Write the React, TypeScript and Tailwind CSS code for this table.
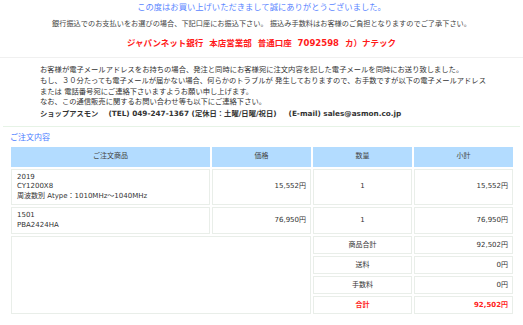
const font = { fontFamily: '"DejaVu Sans", "Noto Sans CJK JP", sans-serif' };

const items = [
  { lines: ["2019", "CY1200X8", "周波数別 Atype：1010MHz～1040MHz"], price: "15,552円", qty: "1", sub: "15,552円" },
  { lines: ["1501", "PBA2424HA"], price: "76,950円", qty: "1", sub: "76,950円" },
];

const totals = [
  { label: "商品合計", value: "92,502円", red: false },
  { label: "送料", value: "0円", red: false },
  { label: "手数料", value: "0円", red: false },
  { label: "合計", value: "92,502円", red: true },
];

const cell = "border border-[#e9eee9] bg-white";

export default function App() {
  return (
    <div className="w-[523px] h-[325px] overflow-hidden bg-white text-[#333]" style={font}>
      {/* thanks + bank info */}
      <div className="pt-[1px] text-center">
        <p className="text-[8.3px] leading-[12px] text-[#5b86ff]">この度はお買い上げいただきまして誠にありがとうございました。</p>
        <p className="mt-[5px] text-[7.2px] leading-[12px] text-[#444]">
          銀行振込でのお支払いをお選びの場合、下記口座にお振込下さい。 振込み手数料はお客様のご負担となりますのでご了承下さい。
        </p>
        <p className="mt-[7px] text-[8.5px] font-bold leading-[12px] text-[#ff1a1a]">
          ジャパンネット銀行&nbsp;&nbsp;本店営業部&nbsp;&nbsp;普通口座&nbsp;&nbsp;7092598&nbsp;&nbsp;カ）ナテック
        </p>
      </div>
      <div className="mt-[8px] h-px bg-[#f0f0f0]" />

      {/* mail notice */}
      <div className="pl-[40px] pt-[7px] text-[7.3px] leading-[10.8px] whitespace-nowrap">
        <p>お客様が電子メールアドレスをお持ちの場合、発注と同時にお客様宛に注文内容を記した電子メールを同時にお送り致しました。</p>
        <p>もし、３０分たっても電子メールが届かない場合、何らかのトラブルが 発生しておりますので、お手数ですが以下の電子メールアドレス</p>
        <p>または 電話番号宛にご連絡下さいますようお願い申し上げます。</p>
        <p>なお、この通信販売に関するお問い合わせ等も以下にご連絡下さい。</p>
        <p className="mt-[1px] font-bold">
          ショップアスモン<span className="ml-[10px]">(TEL) 049-247-1367 (定休日：土曜/日曜/祝日)</span>
          <span className="ml-[12px]">(E-mail) sales@asmon.co.jp</span>
        </p>
      </div>
      <div className="mx-[3px] mt-[6px] h-px bg-[#e6f3e6]" />

      {/* order */}
      <p className="pl-[10px] pt-[5px] text-[8px] leading-[12px] text-[#4a7cff]">ご注文内容</p>
      <table className="ml-[9px] mt-[1px] w-[506px] table-fixed border-separate border-spacing-[2px] text-[7px] leading-[9.5px]">
        <colgroup>
          <col className="w-[199px]" />
          <col className="w-[99px]" />
          <col className="w-[99px]" />
          <col className="w-[99px]" />
        </colgroup>
        <thead>
          <tr className="h-[20px] bg-[#b3dcff] text-center text-[#444]">
            <th className="font-normal">ご注文商品</th>
            <th className="font-normal">価格</th>
            <th className="font-normal">数量</th>
            <th className="font-normal">小計</th>
          </tr>
        </thead>
        <tbody>
          {items.map((it, i) => (
            <tr key={i}>
              <td className={`${cell} px-[5px] py-[3px] align-top`}>
                {it.lines.map((l) => (
                  <div key={l}>{l}</div>
                ))}
              </td>
              <td className={`${cell} px-[4px] text-right`}>{it.price}</td>
              <td className={`${cell} text-center`}>{it.qty}</td>
              <td className={`${cell} px-[4px] text-right`}>{it.sub}</td>
            </tr>
          ))}
          {totals.map((t, i) => (
            <tr key={t.label} className="h-[18px]">
              {i === 0 && <td className={cell} colSpan={2} rowSpan={4} />}
              <td className={`${cell} text-center ${t.red ? "font-bold text-[#ff2222]" : ""}`}>{t.label}</td>
              <td className={`${cell} px-[4px] text-right ${t.red ? "font-bold text-[#ff2222]" : ""}`}>{t.value}</td>
            </tr>
          ))}
        </tbody>
      </table>
    </div>
  );
}
